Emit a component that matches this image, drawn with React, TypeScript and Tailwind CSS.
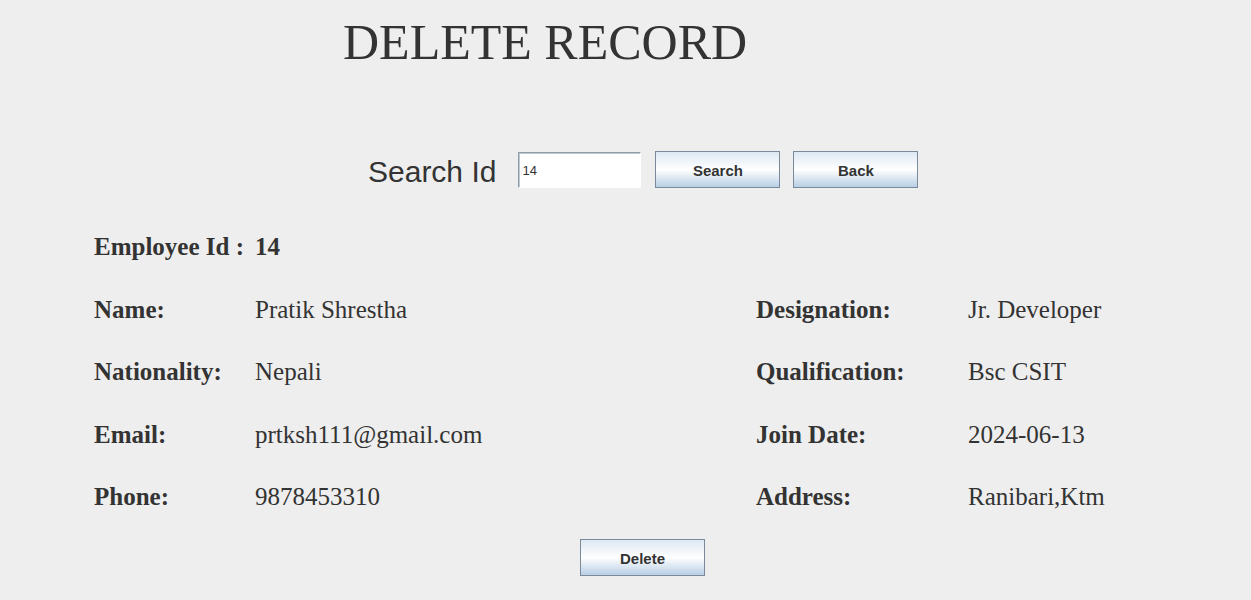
const serif = { fontFamily: '"Liberation Serif", "Times New Roman", serif' }

type Field = { label: string; value: string }

const leftFields: Field[] = [
  { label: 'Name:', value: 'Pratik Shrestha' },
  { label: 'Nationality:', value: 'Nepali' },
  { label: 'Email:', value: 'prtksh111@gmail.com' },
  { label: 'Phone:', value: '9878453310' },
]

const rightFields: Field[] = [
  { label: 'Designation:', value: 'Jr. Developer' },
  { label: 'Qualification:', value: 'Bsc CSIT' },
  { label: 'Join Date:', value: '2024-06-13' },
  { label: 'Address:', value: 'Ranibari,Ktm' },
]

const SwingButton = ({ label }: { label: string }) => (
  <button className="flex h-[37px] w-[125px] items-center justify-center border border-[#7a8a99] bg-gradient-to-b from-[#dde8f3] via-white to-[#b8cfe5] pt-[3px] font-['Liberation_Sans',Arial,sans-serif] text-[15px] font-bold text-[#333333]">
    {label}
  </button>
)

export default function App() {
  return (
    <div className="flex min-h-[600px] w-[1251px] flex-col bg-[#eeeeee] text-[#333333]" style={serif}>
      <div className="flex h-[84px] items-center pl-[343px]">
        <h1 className="text-[50px] leading-none">DELETE RECORD</h1>
      </div>

      <div className="mt-[67px] flex h-[37px] items-center pl-[368px] font-['Liberation_Sans',Arial,sans-serif]">
        <span className="pt-[5px] text-[30px] leading-none">Search Id</span>
        <div className="ml-[22px] flex h-[36px] w-[123px] items-center border border-[#8f9ba8] border-b-white border-r-white bg-white pl-[3px] pt-[2px] text-[13px] shadow-[inset_1px_1px_0_#c0c8d0]">
          14
        </div>
        <div className="ml-[14px]">
          <SwingButton label="Search" />
        </div>
        <div className="ml-[13px]">
          <SwingButton label="Back" />
        </div>
      </div>

      <div className="mt-[28px] flex h-[62px] items-center pl-[94px] text-[25px] font-bold">
        <span className="w-[161px]">Employee Id :</span>
        <span>14</span>
      </div>

      <div className="grid grid-cols-[161px_501px_212px_1fr] pl-[94px] text-[25px]">
        {leftFields.map((f, i) => (
          <div key={f.label} className="contents">
            <div className="flex h-[62.5px] items-center font-bold">{f.label}</div>
            <div className="flex h-[62.5px] items-center">{f.value}</div>
            <div className="flex h-[62.5px] items-center font-bold">{rightFields[i].label}</div>
            <div className="flex h-[62.5px] items-center">{rightFields[i].value}</div>
          </div>
        ))}
      </div>

      <div className="mt-[11px] flex pl-[580px]">
        <SwingButton label="Delete" />
      </div>
    </div>
  )
}
